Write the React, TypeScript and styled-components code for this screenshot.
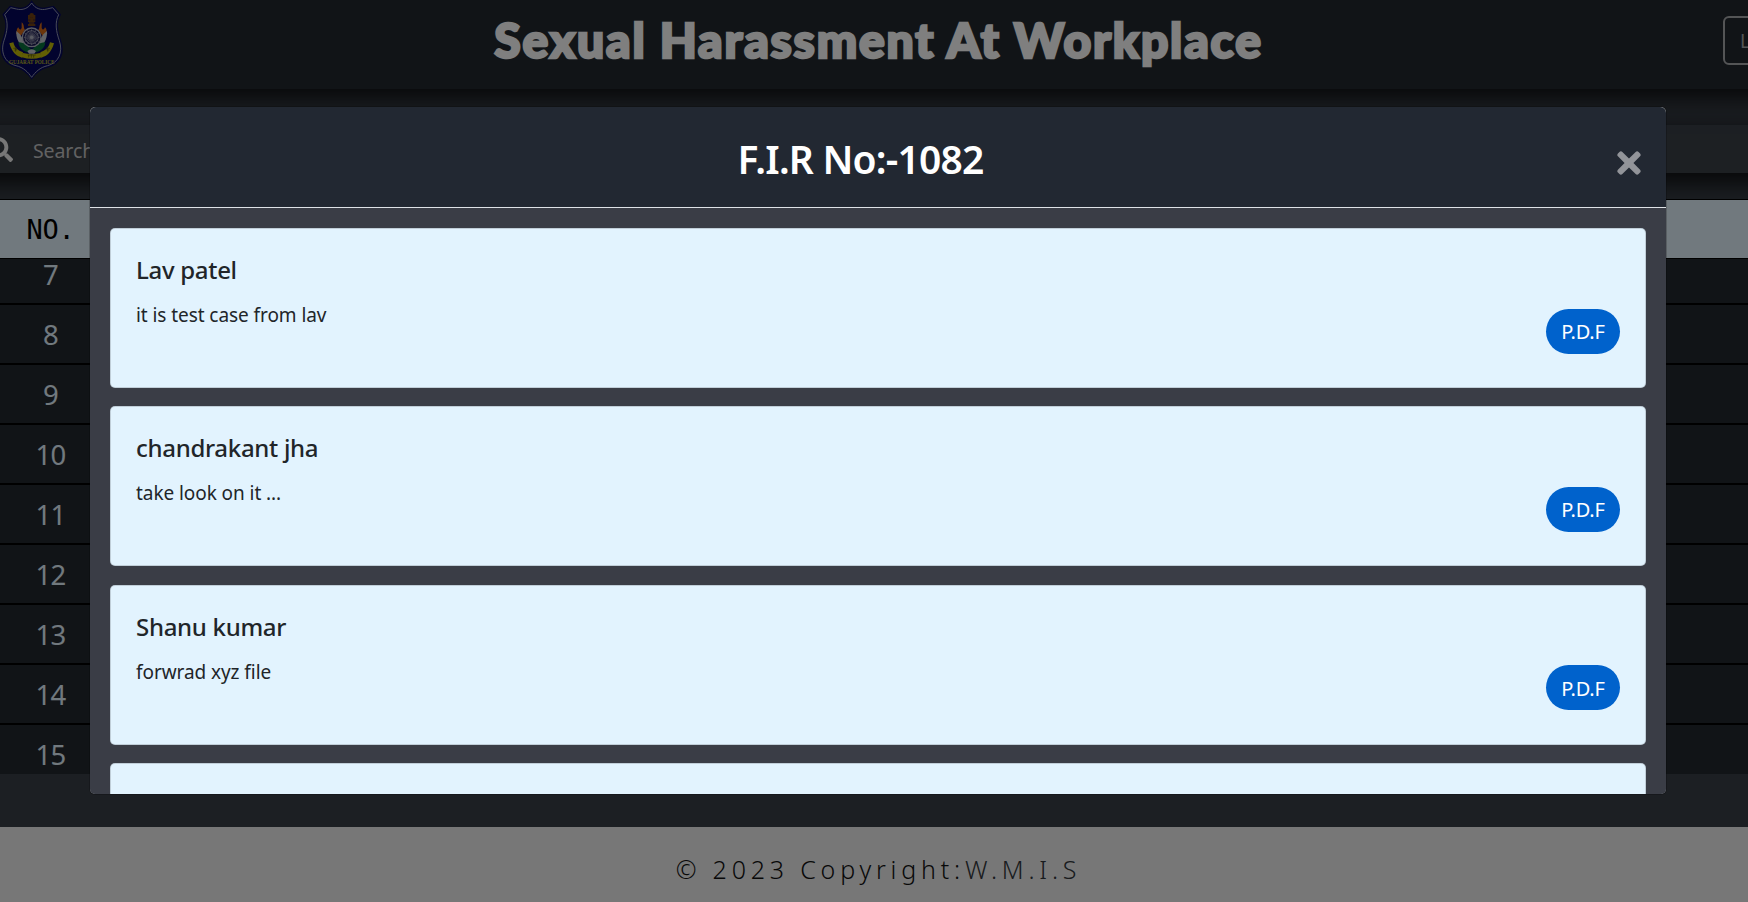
import React from 'react';
import styled, { createGlobalStyle } from 'styled-components';
import { FaSearch, FaTimes } from 'react-icons/fa';

const Global = createGlobalStyle`
  * { box-sizing: border-box; }
  body { margin: 0; overflow: hidden; background: #383e46; font-family: 'Noto Sans', sans-serif; }
  h1, h2, h3, p { margin: 0; }
`;

const Page = styled.div`
  width: 1748px; height: 902px; overflow: hidden; position: relative;
  display: flex; flex-direction: column; background: #383e46;
`;
const Header = styled.header`
  height: 89px; flex: none; position: relative; z-index: 1; margin: 0 -60px; padding: 0 60px;
  display: grid; grid-template-columns: 66px 1fr 25px; align-items: start;
  background: #22282f; box-shadow: 0 5px 24px 4px rgba(0, 0, 0, 0.8);
`;
const Crest = styled.svg`width: 65px; height: 80px; display: block;`;
const SiteTitle = styled.h1`
  padding: 4px 32px 0 0; text-align: center; white-space: nowrap;
  font: 900 48px/72px Lato, sans-serif; letter-spacing: 1.83px; color: #fff;
  -webkit-text-stroke: 2.5px #fff;
`;
const LoginButton = styled.button`
  width: 90px; height: 49px; margin-top: 16px; padding: 0 0 0 15px; text-align: left;
  border: 2px solid #a9abad; border-radius: 6px; background: transparent;
  font: 19px 'Noto Sans', sans-serif; color: #a9abad;
`;
const SearchBar = styled.div`
  height: 48px; flex: none; margin: 36px -60px 0; padding: 0 60px;
  display: flex; align-items: center; gap: 20px;
  background: #3a4047; color: #fff; box-shadow: 0 8px 24px 2px rgba(0, 0, 0, 0.8);
  svg { width: 25px; height: 25px; margin-left: -12px; margin-top: 1px; color: #eee; }
`;
const SearchHint = styled.span`padding-top: 3px; font-size: 19.5px; color: #c4c4c4; letter-spacing: -0.1px;`;
const Table = styled.div`
  height: 575px; flex: none; margin-top: 26px; overflow: hidden; position: relative; z-index: 1;
  display: flex; flex-direction: column; background: #22282f;
`;
const TableHead = styled.div`
  height: 60px; flex: none; position: relative; z-index: 1; display: flex; align-items: center;
  background: #e3f2fd; border: solid #000; border-width: 1px 0;
  font: 27px 'DejaVu Sans Mono', monospace; color: #000; letter-spacing: -0.3px;
`;
const Cell = styled.div`width: 101px; text-align: center;`;
const TableBody = styled.div`margin-top: -14px;`;
const Row = styled.div`
  height: 60px; display: flex; align-items: center; border-bottom: 2px solid #000;
  font-size: 27.5px; letter-spacing: -0.8px; color: #e3f2fd;
`;
const Footer = styled.footer`
  height: 75px; flex: none; margin-top: 53px; padding-left: 9px; background: #eee; text-align: center;
  font: 350 25px/85px 'Noto Sans', sans-serif; letter-spacing: 4.8px; color: #111;
  a { color: #32373c; }
`;
const Backdrop = styled.div`
  position: absolute; inset: 0; z-index: 5; padding: 107px 82px 0 90px;
  background: rgba(0, 0, 0, 0.5);
`;
const Dialog = styled.section`
  height: 687px; overflow: hidden; display: flex; flex-direction: column;
  background: #8d9093; border-radius: 5px; box-shadow: 0 0 0 1px rgba(0, 0, 0, 0.2);
`;
const DialogHeader = styled.div`
  height: 101px; flex: none; display: flex; align-items: center; padding: 2px 25px 0 0;
  background: #222832; border-bottom: 1px solid #dee2e6; border-radius: 6px 6px 0 0;
`;
const DialogTitle = styled.h2`
  flex: 1; padding-left: 19px; text-align: center; color: #fff;
  font-size: 39px; font-weight: 600; letter-spacing: -0.8px;
`;
const CloseButton = styled.button`
  padding: 10px 0 0; border: 0; background: transparent; color: #929499; line-height: 0;
  svg { width: 34px; height: 34px; margin-right: -5px; }
`;
const CaseList = styled.div`
  flex: 1; min-height: 0; overflow: hidden; padding: 20px;
  display: flex; flex-direction: column; gap: 18.3px; background: #3a3d46;
`;
const Card = styled.article`
  height: 160px; flex: none; padding: 24px 25px; display: flex; justify-content: space-between;
  background: #e2f3fe; border: 1px solid rgba(0, 0, 0, 0.15); border-radius: 5px; color: #212529;
`;
const Name = styled.h3`
  font-size: 24px; line-height: 34px; font-weight: 550; letter-spacing: -0.3px;
`;
const Note = styled.p`
  margin-top: 14px; font-size: 19px; line-height: 28px; letter-spacing: -0.07px;
`;
const PdfButton = styled.button`
  width: 74px; height: 45px; margin-top: 55.6px; padding: 1px 0 0; border: 0; border-radius: 23px;
  background: #0062cc; color: #fff; font: 20px 'Noto Sans', sans-serif; letter-spacing: -0.2px;
`;

const cases = [
  { name: 'Lav patel', note: 'it is test case from lav' },
  { name: 'chandrakant jha', note: 'take look on it ...' },
  { name: 'Shanu kumar', note: 'forwrad xyz file' },
  { name: '', note: '' },
];

const spokes = Array.from({ length: 12 }, (_, i) => i * 30);

function PoliceCrest() {
  return (
    <Crest viewBox="0 0 195 240">
      <path d="M95 5C86 20 70 29 49 24L31 20 10 44C24 67 19 91 9 121C-4 159 12 192 47 200C70 205 84 219 95 235C106 219 120 205 144 200C179 192 194 160 181 122C171 92 166 67 180 44L160 20 141 24C120 29 104 20 95 5Z" fill="#06085c" stroke="#06085c" strokeWidth="5" />
      <path d="M95 9C85 25 68 32 49 27L32 23 14 44C26 68 22 93 12 122C0 157 15 189 48 197C70 202 84 216 95 232C106 216 120 202 143 197C175 189 190 157 178 122C168 93 164 68 176 44L158 23 141 27C122 32 105 25 95 9Z" fill="#05075c" stroke="#9297b0" strokeWidth="3" />
      <g fill="#754313">
        <circle cx="95" cy="46" r="7" /><path d="M84 45h7v14h-7zM99 45h7v14h-7zM91 52h8v13h-8zM84 61h22v5H84zM87 67h16v4H87zM84 72h22v6H84z" />
      </g>
      <path d="M65 67C75 76 69 84 75 89L62 108 48 101C52 92 48 89 55 82C57 89 63 91 65 83ZM125 67C115 76 121 84 115 89L128 108 142 101C138 92 142 89 135 82C133 89 127 91 125 83Z" fill="#d76a16" />
      <path d="M49 93C48 111 53 126 66 137L74 126 60 103ZM141 93C142 111 137 126 124 137L116 126 130 103Z" fill="#c6c9d0" />
      <path d="M55 127C75 127 84 142 95 149C107 141 116 127 136 127C135 145 119 158 95 159C72 158 57 146 55 127Z" fill="#08723d" />
      <circle cx="95" cy="112" r="28" fill="#11124d" stroke="#b6b8c6" strokeWidth="4" />
      <circle cx="95" cy="112" r="20" fill="none" stroke="#b6b8c6" strokeWidth="2" />
      {spokes.map(a => <path key={a} d="M95 92V132" stroke="#b6b8c6" strokeWidth="1.5" transform={`rotate(${a / 2} 95 112)`} />)}
      {spokes.map(a => <path key={a} d="M95 88v5" stroke="#b6b8c6" strokeWidth="2" transform={`rotate(${a} 95 112)`} />)}
      <circle cx="95" cy="112" r="5" fill="#b6b8c6" />
      <path d="M82 153Q95 143 108 153L103 161H87Z" fill="#c6c9d0" />
      <path d="M28 130L40 127C44 144 54 152 69 157L66 173C48 168 36 157 28 130ZM162 130L150 127C146 144 136 152 121 157L124 173C142 168 154 157 162 130ZM69 159Q95 166 121 159L124 172Q95 181 66 172Z" fill="#c5bd09" />
      <g fill="none" stroke="#4e4e15" strokeWidth="2">
        <path d="M40 145l10-1M43 150l8-1M47 143v12M139 144l11 1M139 149l9 1M143 143v12M83 165h24M86 165v7M94 163v10M101 166v7" />
      </g>
      <text x="95" y="192" fill="#b5b02c" fontFamily="Liberation Serif" fontWeight="700" fontSize="16" textAnchor="middle" textLength="136" lengthAdjust="spacingAndGlyphs">GUJARAT POLICE</text>
    </Crest>
  );
}

export default function App() {
  return (
    <Page>
      <Global />
      <Header>
        <PoliceCrest />
        <SiteTitle>Sexual Harassment At Workplace</SiteTitle>
        <LoginButton>L</LoginButton>
      </Header>
      <SearchBar><FaSearch /><SearchHint>Search</SearchHint></SearchBar>
      <Table>
        <TableHead><Cell>NO.</Cell></TableHead>
        <TableBody>
          {[7, 8, 9, 10, 11, 12, 13, 14, 15].map(n => <Row key={n}><Cell>{n}</Cell></Row>)}
        </TableBody>
      </Table>
      <Footer>© 2023 Copyright:<a>W.M.I.S</a></Footer>
      <Backdrop>
        <Dialog>
          <DialogHeader>
            <DialogTitle>F.I.R No:-1082</DialogTitle>
            <CloseButton aria-label="Close"><FaTimes /></CloseButton>
          </DialogHeader>
          <CaseList>
            {cases.map((c, i) => (
              <Card key={i}>
                <div>
                  <Name>{c.name}</Name>
                  <Note>{c.note}</Note>
                </div>
                {c.name && <PdfButton>P.D.F</PdfButton>}
              </Card>
            ))}
          </CaseList>
        </Dialog>
      </Backdrop>
    </Page>
  );
}
